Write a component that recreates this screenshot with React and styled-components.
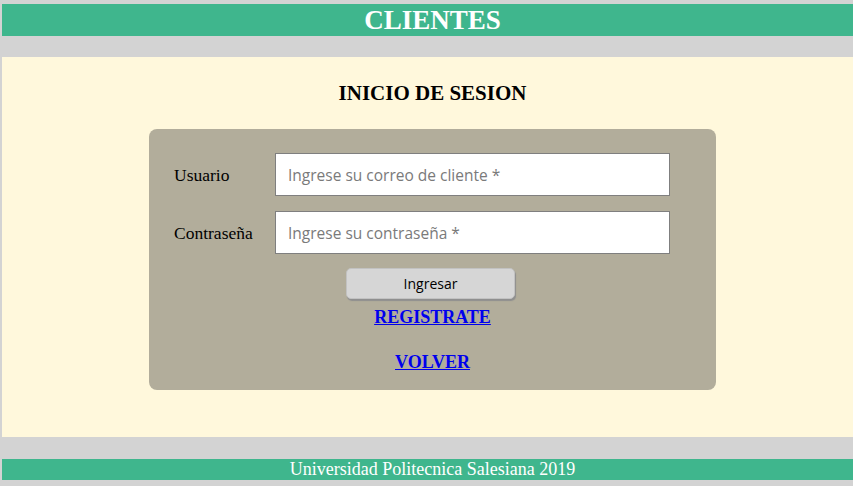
import React from 'react';
import styled, { createGlobalStyle } from 'styled-components';

const Global = createGlobalStyle`
  html, body {
    margin: 0;
    background: #d3d3d3;
    overflow: hidden;
  }
  body {
    font-family: "Liberation Serif", "Times New Roman", serif;
  }
`

const Page = styled("div")`
  width: 861px;
  padding: 4px 0 6px 2px;
  display: flex;
  flex-direction: column;
`
const Header = styled("h1")`
  margin: 0;
  height: 32px;
  background: #3fb68d;
  color: white;
  font-size: 27px;
  font-weight: bold;
  line-height: 32px;
  text-align: center;
`
const Panel = styled("main")`
  margin-top: 21px;
  height: 380px;
  background: #fff8dc;
  display: flex;
  flex-direction: column;
  align-items: center;
`
const Title = styled("h3")`
  margin: 24px 0 0;
  font-size: 21px;
  line-height: 24px;
  color: #000;
`
const Card = styled("form")`
  margin-top: 24px;
  width: 567px;
  box-sizing: border-box;
  padding: 24px 46px 0 25px;
  height: 261px;
  background: #b2ad9b;
  border-radius: 8px;
  display: flex;
  flex-direction: column;
`
const Row = styled("div")`
  display: grid;
  grid-template-columns: 101px 1fr;
  align-items: center;
  margin-bottom: ${p => p.$gap || 0}px;
`
const Label = styled("label")`
  font-size: 17.5px;
  color: #000;
  padding-top: 2px;
`
const Input = styled("input")`
  height: 43px;
  box-sizing: border-box;
  border: 1px solid #7f7f7f;
  padding: 0 12px;
  font-family: "Open Sans", sans-serif;
  font-size: 15.5px;
  background: white;
  outline: none;
  &::placeholder {
    color: #7a7a7a;
  }
`
const Actions = styled("div")`
  margin-left: -25px;
  margin-right: -46px;
  display: flex;
  flex-direction: column;
  align-items: center;
`
const Button = styled("button")`
  margin: 14px 4px 0 0;
  width: 169px;
  height: 31px;
  background: #d6d6d6;
  border: 1px solid #c2c2c2;
  border-radius: 5px;
  box-shadow: 1px 2px 1px #8f8f8f;
  font-family: "Open Sans", "Liberation Sans", sans-serif;
  font-size: 14px;
  color: #000;
`
const Link = styled("a")`
  margin-top: ${p => p.$top}px;
  font-size: 18px;
  font-weight: bold;
  color: #0000ee;
  text-decoration: underline;
  line-height: 22px;
`
const Footer = styled("footer")`
  margin-top: 22px;
  height: 21px;
  background: #3fb68d;
  color: white;
  font-size: 18px;
  line-height: 21px;
  text-align: center;
`

const App = () => {
  return (
    <>
      <Global />
      <Page>
        <Header>CLIENTES</Header>
        <Panel>
          <Title>INICIO DE SESION</Title>
          <Card onSubmit={e => e.preventDefault()}>
            <Row $gap={15}>
              <Label>Usuario</Label>
              <Input type="text" placeholder="Ingrese su correo de cliente *" />
            </Row>
            <Row>
              <Label>Contraseña</Label>
              <Input type="password" placeholder="Ingrese su contraseña *" />
            </Row>
            <Actions>
              <Button type="submit">Ingresar</Button>
              <Link href="#" $top={7}>REGISTRATE</Link>
              <Link href="#" $top={23}>VOLVER</Link>
            </Actions>
          </Card>
        </Panel>
        <Footer>Universidad Politecnica Salesiana 2019</Footer>
      </Page>
    </>
  )
}

export default App;
